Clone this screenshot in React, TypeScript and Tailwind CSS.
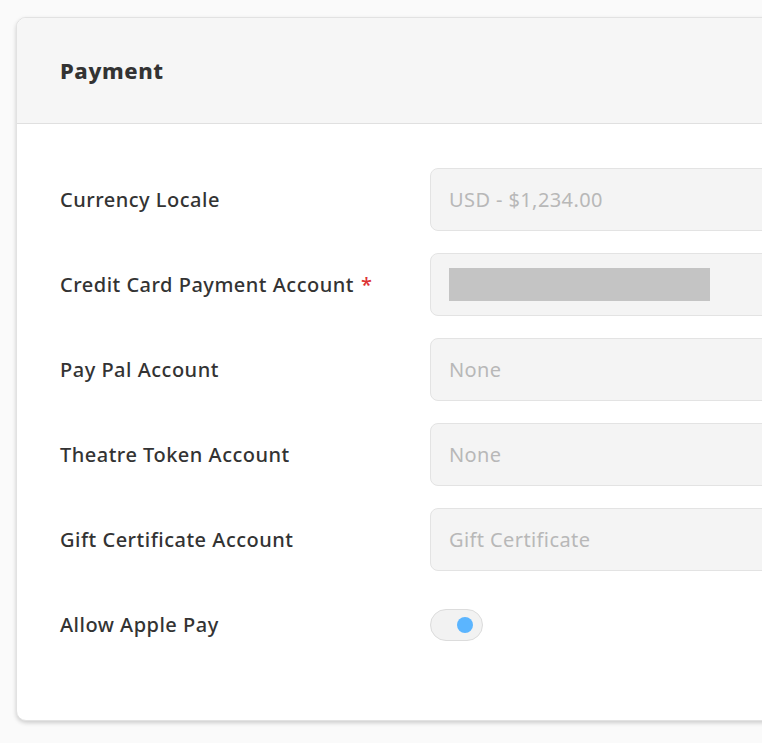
export default function App() {
  const rows = [
    { label: "Currency Locale", value: "USD - $1,234.00" },
    { label: "Credit Card Payment Account", req: true, bar: true },
    { label: "Pay Pal Account", value: "None" },
    { label: "Theatre Token Account", value: "None" },
    { label: "Gift Certificate Account", value: "Gift Certificate" },
  ];
  return (
    <div className="w-[762px] h-[743px] overflow-hidden bg-[#fafafa] pt-[17px] pl-[16px]" style={{ fontFamily: '"Noto Sans", "Open Sans", sans-serif' }}>
      <div className="w-[820px] rounded-[10px] border border-[#e2e2e2] bg-white shadow-[0_2px_4px_rgba(0,0,0,0.18)] overflow-hidden">
        <div className="h-[106px] bg-[#f6f6f6] border-b border-[#e0e0e0] flex items-center pl-[43px]">
          <span className="text-[22px] font-extrabold tracking-[0.6px] text-[#333]">Payment</span>
        </div>
        <div className="pt-[44px] pb-[64px] pl-[43px] flex flex-col gap-[22px]">
          {rows.map((r) => (
            <div key={r.label} className="flex items-center h-[63px]">
              <div className="w-[370px] text-[20px] font-medium tracking-[0.5px] text-[#333]">
                {r.label}
                {r.req && <span className="text-[#d33] ml-[7px]">*</span>}
              </div>
              <div className="flex-1 h-[63px] rounded-[8px] border border-[#e3e3e3] bg-[#f4f4f4] flex items-center pl-[18px]">
                {r.bar ? (
                  <div className="w-[261px] h-[33px] bg-[#c4c4c4]" />
                ) : (
                  <span className="text-[20px] tracking-[0.4px] text-[#b8b8b8]">{r.value}</span>
                )}
              </div>
            </div>
          ))}
          <div className="flex items-center h-[63px]">
            <div className="w-[370px] text-[20px] font-medium tracking-[0.5px] text-[#333]">Allow Apple Pay</div>
            <div className="w-[53px] h-[32px] rounded-full border border-[#dcdcdc] bg-[#f2f2f2] flex items-center justify-end pr-[9px]">
              <div className="w-[16px] h-[16px] rounded-full bg-[#5bb5ff]" />
            </div>
          </div>
        </div>
      </div>
    </div>
  );
}
